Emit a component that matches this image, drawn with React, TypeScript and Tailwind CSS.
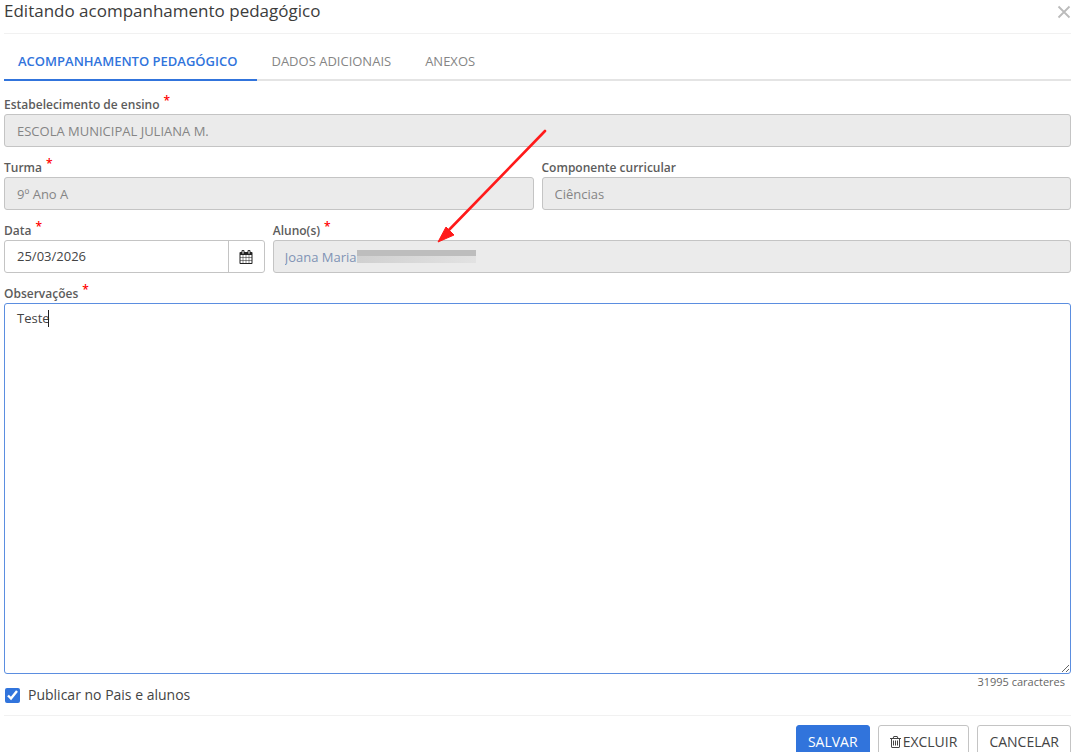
import { useState } from "react";
import type { ReactNode } from "react";

const tabs = ["ACOMPANHAMENTO PEDAGÓGICO", "DADOS ADICIONAIS", "ANEXOS"];

const disabledInput =
  "block h-[33px] w-full rounded-[3px] border border-[#c4c4c4] bg-[#ebebeb] px-3 text-[13px] text-[#858585]";

function CalendarIcon() {
  return (
    <svg viewBox="0 0 1792 1792" className="h-[14px] w-[14px]" fill="currentColor" aria-hidden="true">
      <path d="M192 1664h288v-288h-288v288zm352 0h320v-288h-320v288zm-352-352h288v-320h-288v320zm352 0h320v-320h-320v320zm-352-384h288v-288h-288v288zm736 736h320v-288h-320v288zm-384-736h320v-288h-320v288zm768 736h288v-288h-288v288zm-384-352h320v-320h-320v320zm-352-864v-288q0-13-9.5-22.5t-22.5-9.5h-64q-13 0-22.5 9.5t-9.5 22.5v288q0 13 9.5 22.5t22.5 9.5h64q13 0 22.5-9.5t9.5-22.5zm736 864h288v-320h-288v320zm-384-384h320v-288h-320v288zm384 0h288v-288h-288v288zm32-480v-288q0-13-9.5-22.5t-22.5-9.5h-64q-13 0-22.5 9.5t-9.5 22.5v288q0 13 9.5 22.5t22.5 9.5h64q13 0 22.5-9.5t9.5-22.5zm384-64v1280q0 52-38 90t-90 38h-1408q-52 0-90-38t-38-90v-1280q0-52 38-90t90-38h128v-96q0-66 47-113t113-47h64q66 0 113 47t47 113v96h384v-96q0-66 47-113t113-47h64q66 0 113 47t47 113v96h128q52 0 90 38t38 90z" />
    </svg>
  );
}

function TrashIcon() {
  return (
    <svg viewBox="192 128 1408 1536" className="h-3 w-[11px]" fill="currentColor" aria-hidden="true">
      <path d="M704 736v576q0 14-9 23t-23 9h-64q-14 0-23-9t-9-23v-576q0-14 9-23t23-9h64q14 0 23 9t9 23zm256 0v576q0 14-9 23t-23 9h-64q-14 0-23-9t-9-23v-576q0-14 9-23t23-9h64q14 0 23 9t9 23zm256 0v576q0 14-9 23t-23 9h-64q-14 0-23-9t-9-23v-576q0-14 9-23t23-9h64q14 0 23 9t9 23zm128 724v-948h-896v948q0 22 7 40.5t14.5 27 10.5 8.5h832q3 0 10.5-8.5t14.5-27 7-40.5zm-672-1076h448l-48-117q-7-9-17-11h-317q-10 2-17 11zm928 32v64q0 14-9 23t-23 9h-96v948q0 83-47 143.5t-113 60.5h-832q-66 0-113-58.5t-47-141.5v-952h-96q-14 0-23-9t-9-23v-64q0-14 9-23t23-9h309l70-167q15-37 54-63t79-26h320q40 0 79 26t54 63l70 167h309q14 0 23 9t9 23z" />
    </svg>
  );
}

function Field({ id, label, required, className, children }: {
  id: string;
  label: string;
  required?: boolean;
  className?: string;
  children: ReactNode;
}) {
  return (
    <div className={className}>
      <label htmlFor={id} className="flex h-[30px] items-end gap-1 text-[12px] leading-[18px] font-semibold text-[#5c5c5c]">
        {label}
        {required && <span className="pb-1 text-[#f00]">*</span>}
      </label>
      {children}
    </div>
  );
}

export default function App() {
  const [tab, setTab] = useState(0);
  const [text, setText] = useState("Teste");

  return (
    <div className="h-screen overflow-hidden bg-white pl-1 font-['Open_Sans',sans-serif] text-[#444]">
      <header className="flex h-[34px] items-start justify-between border-b border-[#f1f1f1]">
        <h1 className="text-[17px] leading-[22px] text-[#3c3c3c]">Editando acompanhamento pedagógico</h1>
        <button type="button" aria-label="Fechar" className="pt-[5px] text-[#bbb]">
          <svg viewBox="0 0 14 14" className="h-[14px] w-[14px]" fill="none" stroke="currentColor" strokeWidth="1.8">
            <path d="M1.5 1.5l11 11M12.5 1.5l-11 11" />
          </svg>
        </button>
      </header>

      <nav className="mt-2 flex h-[39px] border-b-2 border-[#e4e4e4]">
        {tabs.map((name, i) => (
          <button
            key={name}
            type="button"
            onClick={() => setTab(i)}
            className={
              i === tab
                ? "h-[39px] border-b-2 border-[#3174dc] pt-[2px] pr-5 pl-[14px] text-[13px] font-semibold text-[#3174dc]"
                : "h-[39px] border-b-2 border-transparent pt-[2px] pr-5 pl-[14px] text-[13px] text-[#858585]"
            }
          >
            {name}
          </button>
        ))}
      </nav>

      <form className="relative pt-[3px]" onSubmit={(e) => e.preventDefault()}>
        <Field id="escola" label="Estabelecimento de ensino" required>
          <input id="escola" disabled defaultValue="ESCOLA MUNICIPAL JULIANA M." className={disabledInput} />
        </Field>

        <div className="grid grid-cols-2 gap-2">
          <Field id="turma" label="Turma" required>
            <input id="turma" disabled defaultValue="9º Ano A" className={disabledInput} />
          </Field>
          <Field id="componente" label="Componente curricular">
            <input id="componente" disabled defaultValue="Ciências" className={disabledInput} />
          </Field>
        </div>

        <div className="grid grid-cols-4 gap-2">
          <Field id="data" label="Data" required>
            <div className="flex h-[33px] rounded-[3px] border border-[#c4c4c4]">
              <input id="data" defaultValue="25/03/2026" className="min-w-0 flex-1 px-3 text-[13px] text-[#444] outline-none" />
              <button type="button" aria-label="Abrir calendário" className="flex w-9 items-center justify-center border-l border-[#c4c4c4] text-[#222]">
                <CalendarIcon />
              </button>
            </div>
          </Field>
          <Field id="alunos" label="Aluno(s)" required className="col-span-3">
            <div className="relative">
              <input id="alunos" disabled defaultValue="Joana Maria" className="block h-[33px] w-full rounded-[3px] border border-[#c4c4c4] bg-[#ebebeb] px-[11px] text-[13px] text-[#8093b5]" />
              {/* hidden surname */}
              <div className="absolute top-[10px] left-[84px] w-[119px]">
                <div className="h-[6px] bg-[#bdbdbd]" />
                <div className="h-[7px] bg-linear-to-r from-[#d0d0d0] to-[#e2e2e2]" />
              </div>
            </div>
          </Field>
        </div>

        <Field id="observacoes" label="Observações" required>
          <div className="relative">
            <textarea
              id="observacoes"
              value={text}
              onChange={(e) => setText(e.target.value)}
              className="block h-[371px] w-full rounded-[3px] border border-[#5b8ee0] px-3 py-[5px] text-[13px] leading-[18px] text-[#444] outline-none"
            />
            <span className="absolute top-[7px] left-[44px] h-[17px] w-px bg-[#222]" />
          </div>
        </Field>

        <div className="flex h-[42px] items-start justify-between border-b border-[#f1f1f1]">
          <label className="flex items-center gap-2 pt-[11px] text-[14px] leading-[20px]">
            <input type="checkbox" defaultChecked className="ml-px h-[15px] w-[15px] accent-[#3174dc]" />
            Publicar no Pais e alunos
          </label>
          <span className="pr-[6px] text-[11px] leading-[16px] text-[#666]">{32000 - text.length} caracteres</span>
        </div>

        <footer className="flex justify-end gap-2 pt-[9px] text-[14px]">
          <button type="submit" className="h-[33px] rounded-[3px] border border-[#3174dc] bg-[#3174dc] px-[11px] text-white">SALVAR</button>
          <button type="button" className="flex h-[33px] items-center gap-[2px] rounded-[3px] border border-[#c4c4c4] px-[11px]">
            <TrashIcon />
            EXCLUIR
          </button>
          <button type="button" className="h-[33px] rounded-[3px] border border-[#c4c4c4] px-[11px]">CANCELAR</button>
        </footer>

        {/* arrow pointing at the students field */}
        <svg viewBox="0 0 110 114" className="pointer-events-none absolute top-[48px] left-[433px] h-[114px] w-[110px]">
          <path d="M108 2L10 103" stroke="#ff1a1a" strokeWidth="2.6" strokeLinecap="round" />
          <path d="M1 113L9 98L12 101L17 106Z" fill="#ff1a1a" stroke="#ff1a1a" strokeLinejoin="round" />
        </svg>
      </form>
    </div>
  );
}
